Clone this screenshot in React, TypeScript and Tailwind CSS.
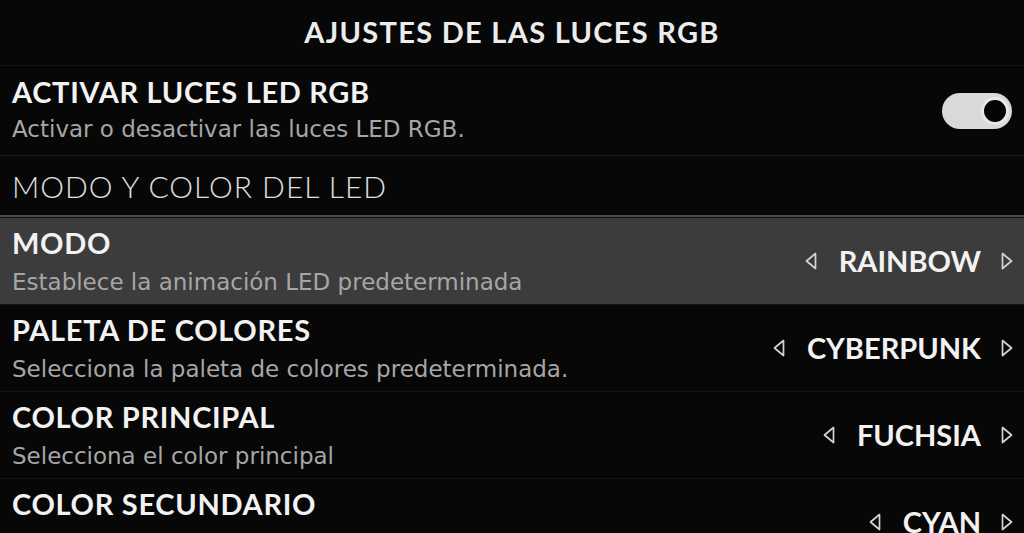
import React from "react";

const font = { fontFamily: "Lato, 'Noto Sans', sans-serif" };
const descFont = { fontFamily: "'DejaVu Sans', 'Noto Sans', sans-serif" };

function ArrowLeft() {
  return (
    <svg width="12" height="18" viewBox="0 0 12 18" className="shrink-0">
      <polygon points="10.5,1.5 1.5,9 10.5,16.5" fill="none" stroke="#d4d4d4" strokeWidth="1.7" strokeLinejoin="round" />
    </svg>
  );
}
function ArrowRight() {
  return (
    <svg width="12" height="18" viewBox="0 0 12 18" className="shrink-0">
      <polygon points="1.5,1.5 10.5,9 1.5,16.5" fill="none" stroke="#d4d4d4" strokeWidth="1.7" strokeLinejoin="round" />
    </svg>
  );
}

function Row({ title, desc, value, active }: { title: string; desc?: string; value: string; active?: boolean }) {
  return (
    <div className={`flex h-[87px] shrink-0 items-center justify-between border-b border-[#151515] pl-3 pr-[11px] ${active ? "bg-[#3c3c3c]" : ""}`}>
      <div className="flex flex-col self-start pt-[8px]">
        <div className="text-[29px] font-bold leading-[34px] tracking-[0.7px] text-[#f2f2f2]">{title}</div>
        {desc && (
          <div className="mt-[8px] text-[23px] leading-[28px] text-[#a6a6a6]" style={descFont}>
            {desc}
          </div>
        )}
      </div>
      <div className="flex items-center">
        <ArrowLeft />
        <span className="ml-[22px] mr-[20px] text-[29px] font-bold leading-[34px] text-[#f2f2f2]">{value}</span>
        <ArrowRight />
      </div>
    </div>
  );
}

export default function App() {
  return (
    <div className="flex h-[533px] w-[1024px] flex-col overflow-hidden bg-[#070707]" style={font}>
      <div className="flex h-[66px] shrink-0 items-center justify-center border-b border-[#161616] pb-[2px]">
        <span className="text-[29px] font-bold tracking-[1.3px] text-[#ececec]">AJUSTES DE LAS LUCES RGB</span>
      </div>
      <div className="flex h-[90px] shrink-0 items-center justify-between border-b border-[#181818] px-3">
        <div className="flex flex-col self-start pt-[9px]">
          <div className="text-[29px] font-bold leading-[34px] tracking-[0.7px] text-[#f2f2f2]">ACTIVAR LUCES LED RGB</div>
          <div className="mt-[6px] text-[23px] leading-[28px] text-[#a6a6a6]" style={descFont}>
            Activar o desactivar las luces LED RGB.
          </div>
        </div>
        <div className="relative h-[36px] w-[70px] rounded-full bg-[#d9d9d9]">
          <div className="absolute right-[3px] top-[4px] h-[28px] w-[28px] rounded-full border-[3px] border-[#e8e8e8] bg-[#050505]" />
        </div>
      </div>
      <div className="flex h-[61px] shrink-0 items-center border-b-2 border-[#4a4a4a] px-3">
        <span className="text-[30px] font-light leading-[34px] tracking-[1px] text-[#e0e0e0]">MODO Y COLOR DEL LED</span>
      </div>
      <div className="h-[1px] shrink-0 bg-[#111]" />
      <Row title="MODO" desc="Establece la animación LED predeterminada" value="RAINBOW" active />
      <Row title="PALETA DE COLORES" desc="Selecciona la paleta de colores predeterminada." value="CYBERPUNK" />
      <Row title="COLOR PRINCIPAL" desc="Selecciona el color principal" value="FUCHSIA" />
      <Row title="COLOR SECUNDARIO" desc="" value="CYAN" />
    </div>
  );
}
